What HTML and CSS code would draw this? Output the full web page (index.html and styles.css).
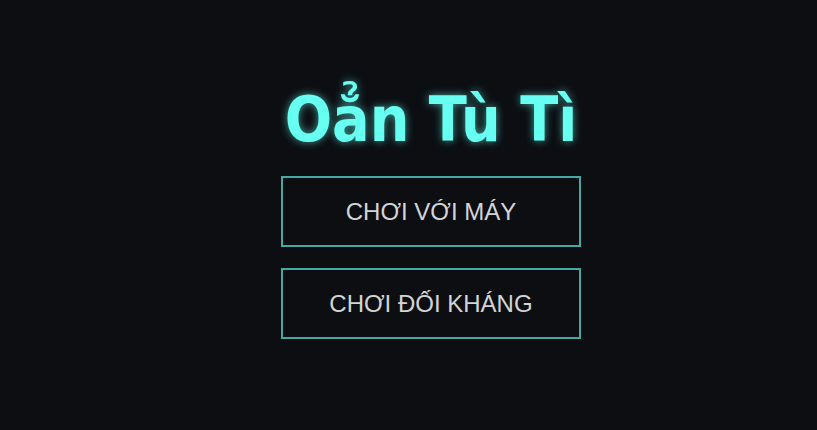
FILE: index.html
```html
<!DOCTYPE html>
<html lang="vi">
<head>
<meta charset="utf-8">
<title>Oẳn Tù Tì</title>
<link rel="stylesheet" href="styles.css">
</head>
<body>
<main class="menu">
  <h1 class="title">Oẳn Tù Tì</h1>
  <button class="btn">CHƠI VỚI MÁY</button>
  <button class="btn">CHƠI ĐỐI KHÁNG</button>
</main>
</body>
</html>
```
FILE: styles.css
```css
html, body {
  margin: 0;
  height: 100%;
  background: #0c0e12;
}
.menu {
  display: flex;
  flex-direction: column;
  align-items: center;
  padding-top: 82px;
  padding-left: 45px;
}
.title {
  margin: 0 0 18px 0;
  font-family: "DejaVu Sans Condensed", "DejaVu Sans", sans-serif;
  font-stretch: condensed;
  font-weight: bold;
  font-size: 62px;
  line-height: 76px;
  color: #66fff2;
  text-shadow: 0 0 8px rgba(102, 255, 242, 0.6);
}
.btn {
  width: 300px;
  height: 71px;
  margin-bottom: 21px;
  background: transparent;
  border: 2px solid #45a8a3;
  color: #d4d4d4;
  font-family: "Liberation Sans", Arial, sans-serif;
  font-size: 24px;
  padding: 0;
}
```
